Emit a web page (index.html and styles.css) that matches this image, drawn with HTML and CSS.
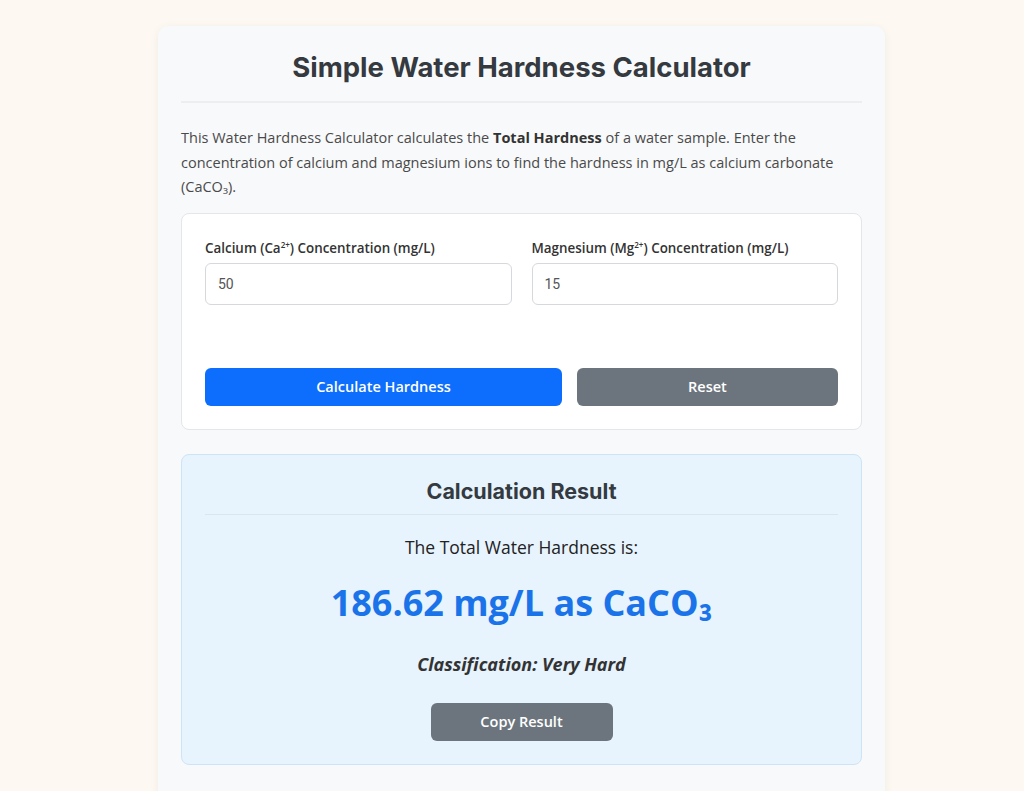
FILE: index.html
```html
<!DOCTYPE html>
<html lang="en">
<head>
  <meta charset="UTF-8">
  <meta name="viewport" content="width=device-width, initial-scale=1.0">
  <title>Simple Water Hardness Calculator</title>
  <link rel="stylesheet" href="styles.css">
</head>
<body>
  <div class="calculator">
    <h1 class="title">Simple Water Hardness Calculator</h1>

    <p class="intro">This Water Hardness Calculator calculates the <b>Total Hardness</b> of a water sample. Enter the concentration of calcium and magnesium ions to find the hardness in mg/L as calcium carbonate (CaCO₃).</p>

    <div class="form-card">
      <div class="fields">
        <div class="field">
          <label for="calcium">Calcium (Ca<sup>2+</sup>) Concentration (mg/L)</label>
          <input type="number" id="calcium" value="50">
        </div>
        <div class="field">
          <label for="magnesium">Magnesium (Mg<sup>2+</sup>) Concentration (mg/L)</label>
          <input type="number" id="magnesium" value="15">
        </div>
      </div>

      <div class="actions">
        <button class="btn btn-primary" id="calc-btn">Calculate Hardness</button>
        <button class="btn btn-secondary" id="reset-btn">Reset</button>
      </div>
    </div>

    <div class="result" id="result">
      <h2 class="result-title">Calculation Result</h2>
      <p class="result-label">The Total Water Hardness is:</p>
      <p class="result-value" id="result-value">186.62 mg/L as CaCO₃</p>
      <p class="result-class" id="classification">Classification: Very Hard</p>
      <button class="btn btn-secondary copy-btn" id="copy-btn">Copy Result</button>
    </div>
  </div>

  <script>
    const calcInput = document.getElementById('calcium');
    const magInput = document.getElementById('magnesium');
    const resultBox = document.getElementById('result');

    function classify(h) {
      if (h < 60) return 'Soft';
      if (h < 120) return 'Moderately Hard';
      if (h < 180) return 'Hard';
      return 'Very Hard';
    }

    document.getElementById('calc-btn').addEventListener('click', () => {
      const ca = parseFloat(calcInput.value) || 0;
      const mg = parseFloat(magInput.value) || 0;
      // mg/L as CaCO3 = 2.497*Ca + 4.118*Mg
      const hardness = 2.497 * ca + 4.118 * mg;
      document.getElementById('result-value').innerText = `${hardness.toFixed(2)} mg/L as CaCO₃`;
      document.getElementById('classification').innerText = `Classification: ${classify(hardness)}`;
      resultBox.style.display = 'block';
    });

    document.getElementById('reset-btn').addEventListener('click', () => {
      calcInput.value = '';
      magInput.value = '';
      resultBox.style.display = 'none';
    });

    document.getElementById('copy-btn').addEventListener('click', () => {
      const text = document.getElementById('result-value').innerText;
      if (navigator.clipboard) navigator.clipboard.writeText(text);
    });
  </script>
</body>
</html>
```

FILE: styles.css
```css
:root {
  --page-bg: #fdf8f2;
  --card-bg: #f8f9fa;
  --border: #e3e6ea;
  --heading: #343a40;
  --text: #444;
  --primary: #0d6efd;
  --secondary: #6c757d;
  --result-bg: #e7f3fd;
  --result-border: #cde4f7;
  --result-blue: #1a73e8;
}

* {
  margin: 0;
  padding: 0;
  box-sizing: border-box;
}

body {
  background-color: var(--page-bg);
  font-family: "Open Sans", "Noto Sans", sans-serif;
  color: var(--text);
  padding: 26px 0 0 19px;
}

.calculator {
  width: 727px;
  margin: 0 auto;
  background-color: var(--card-bg);
  border-radius: 10px;
  box-shadow: 0 2px 10px rgba(0, 0, 0, 0.06);
  padding: 23px 23px 40px;
}

.title {
  font-family: Inter, Roboto, sans-serif;
  font-size: 27.5px;
  font-weight: 700;
  color: var(--heading);
  text-align: center;
  line-height: 36px;
  padding-bottom: 16px;
  border-bottom: 2px solid #eceef0;
  margin-bottom: 23px;
}

.intro {
  font-size: 14.5px;
  line-height: 24.5px;
  color: #4a4a4a;
  margin-bottom: 13px;
}

.intro b {
  color: #333;
}

.form-card {
  background-color: #fff;
  border: 1px solid var(--border);
  border-radius: 8px;
  padding: 25px 23px 23px;
}

.fields {
  display: grid;
  grid-template-columns: 1fr 1fr;
  gap: 20px;
  margin-bottom: 63px;
}

.field label {
  display: block;
  font-size: 13.4px;
  font-weight: 600;
  color: #333;
  line-height: 18px;
  margin-bottom: 6px;
}

.field sup {
  font-size: 0.6em;
  line-height: 0;
}

.field input {
  width: 100%;
  height: 42px;
  border: 1px solid #d5d8dc;
  border-radius: 6px;
  padding: 0 12px;
  font-family: Roboto, sans-serif;
  font-size: 14px;
  color: #555;
  background: #fff;
  -moz-appearance: textfield;
}

.field input::-webkit-inner-spin-button,
.field input::-webkit-outer-spin-button {
  -webkit-appearance: none;
  margin: 0;
}

.actions {
  display: flex;
  gap: 15px;
}

.btn {
  border: none;
  border-radius: 6px;
  height: 38px;
  padding: 0 20px;
  font-family: "Open Sans", "Noto Sans", sans-serif;
  font-size: 14.5px;
  font-weight: 600;
  color: #fff;
  cursor: pointer;
}

.actions .btn {
  flex: 1 1 auto;
}

.btn-primary {
  background-color: var(--primary);
}

.btn-secondary {
  background-color: var(--secondary);
}

.result {
  margin-top: 24px;
  background-color: var(--result-bg);
  border: 1px solid var(--result-border);
  border-radius: 8px;
  padding: 19px 23px 23px;
  text-align: center;
}

.result-title {
  font-family: Inter, Roboto, sans-serif;
  font-size: 21.5px;
  font-weight: 700;
  color: var(--heading);
  line-height: 34px;
  padding-bottom: 6px;
  border-bottom: 1px solid #d8e6f1;
  margin-bottom: 17px;
}

.result-label {
  font-size: 17.5px;
  color: #222;
  line-height: 30px;
  margin-bottom: 17px;
}

.result-value {
  font-size: 36px;
  font-weight: 700;
  color: var(--result-blue);
  line-height: 48px;
  margin-bottom: 23px;
}

.result-class {
  font-size: 18px;
  font-weight: 700;
  font-style: italic;
  color: #333;
  line-height: 28px;
  margin-bottom: 25px;
}

.copy-btn {
  width: 182px;
}
```
